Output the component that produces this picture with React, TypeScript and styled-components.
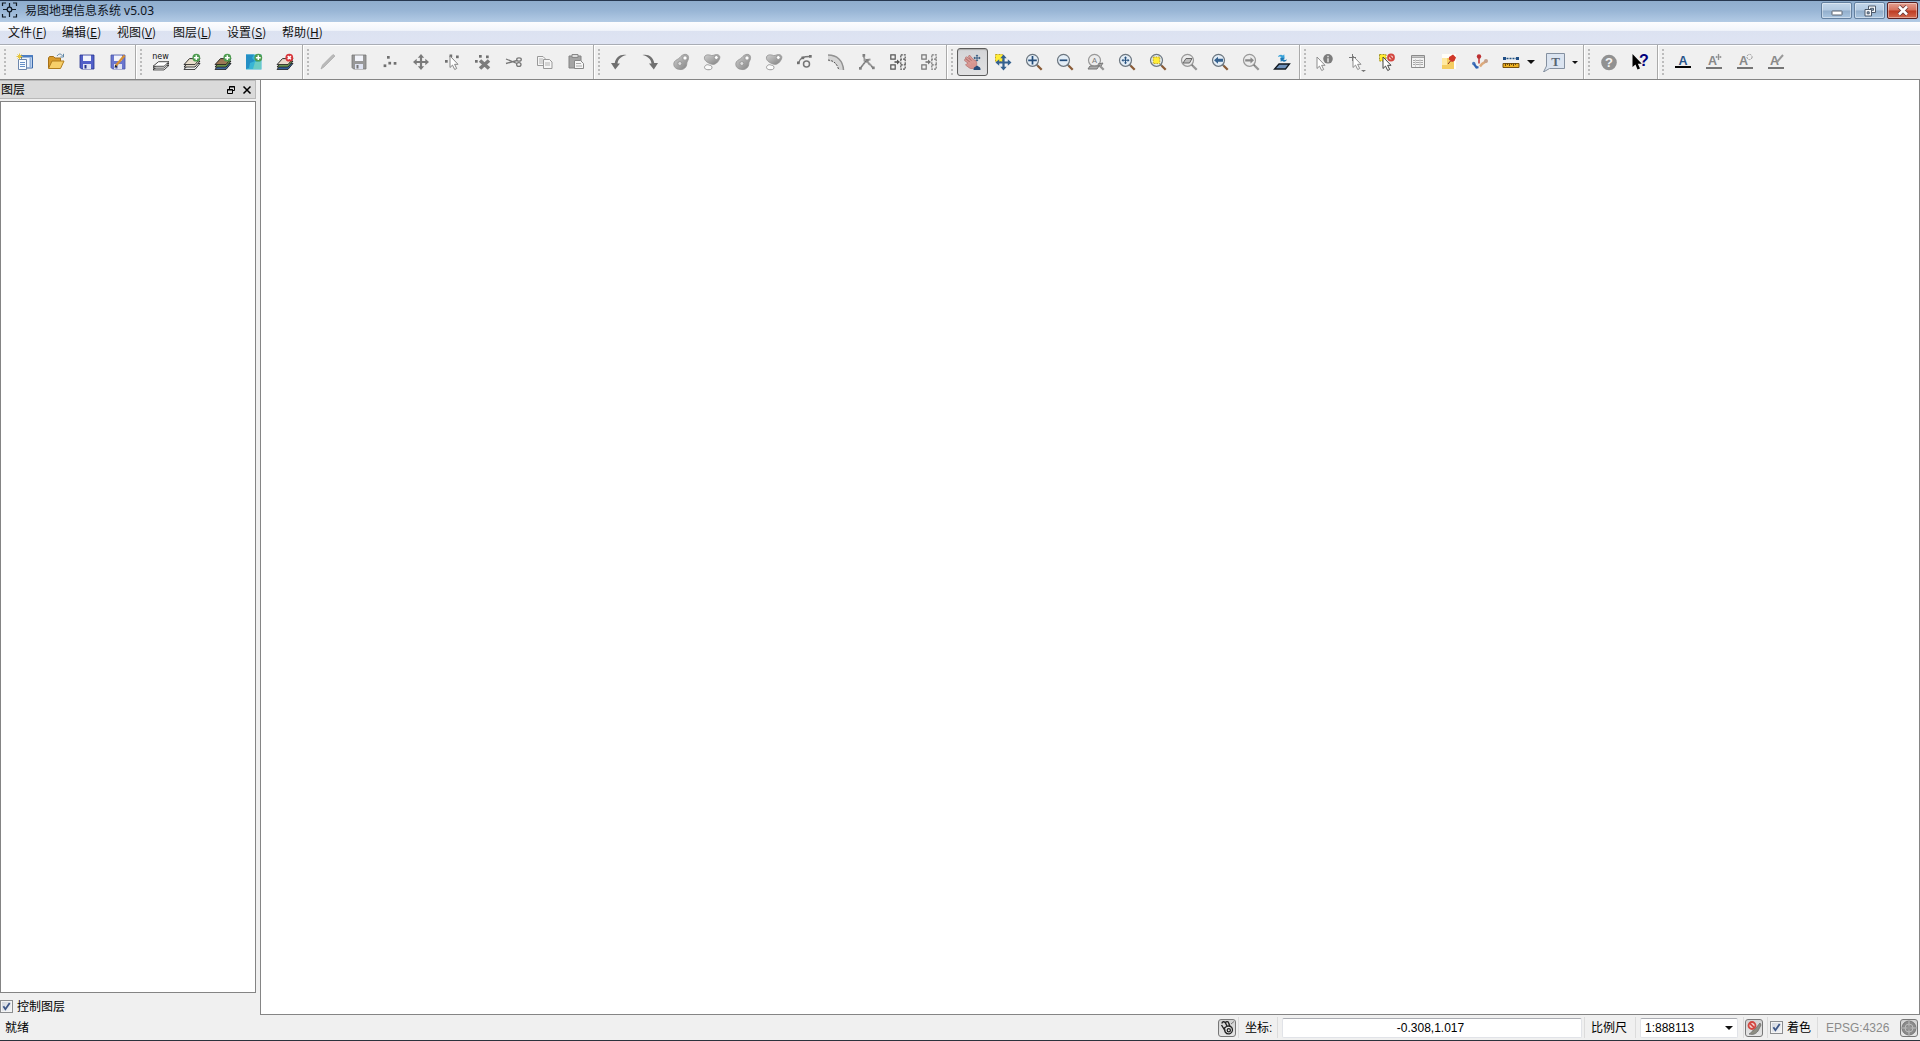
import React from "react";
import styled, { createGlobalStyle, css } from "styled-components";

const ui = `"Noto Sans", "Noto Sans CJK SC", sans-serif`;
const menuFont = `"Noto Sans CJK SC", sans-serif`;
const arial = `"Liberation Sans", "Noto Sans CJK SC", sans-serif`;

const Global = createGlobalStyle`
  * { box-sizing: border-box; }
  html, body { margin: 0; padding: 0; overflow: hidden; }
  body { font: 12px ${arial}; color: #000; background: #f0f0f0; }
`;

const Window = styled.div`
  width: 1920px;
  height: 1041px;
  display: flex;
  flex-direction: column;
  background: #f0f0f0;
  border-bottom: 1px solid #2b333d;
`;

const TitleBar = styled.header`
  height: 22px;
  flex: none;
  display: flex;
  align-items: flex-start;
  border-top: 1px solid #26374f;
  background: linear-gradient(#8fadcd, #98b5d5 45%, #b3cbe5);
`;
const AppIcon = styled.svg`
  width: 18px;
  height: 18px;
  margin: 0 0 0 1px;
`;
const Title = styled.h1`
  margin: 0 auto 0 6px;
  font: 12px/20px ${ui};
  color: #10151d;
`;
const WindowButtons = styled.div`
  display: flex;
  gap: 2px;
  padding: 1px 2px 0 0;
`;
const WindowButton = styled.button<{ $danger?: boolean }>`
  width: 31px;
  height: 17px;
  padding: 0;
  display: flex;
  align-items: center;
  justify-content: center;
  border: 1px solid ${(p) => (p.$danger ? "#5b1f1f" : "#64809f")};
  border-radius: 2px;
  background: ${(p) =>
    p.$danger
      ? "linear-gradient(#e3a091, #d5705c 48%, #bd3a22 52%, #d36a4f)"
      : "linear-gradient(#c3d6ea, #b2c9e1 48%, #92aecb 52%, #abc6e1)"};
  box-shadow: inset 0 0 0 1px rgba(255, 255, 255, 0.4);
`;

const MenuBar = styled.nav`
  height: 22px;
  flex: none;
  display: flex;
  padding-left: 8px;
  background: linear-gradient(#fdfdfe, #f2f5fb 38%, #dce2f1 42%, #dfe4f3);
`;
const MenuItem = styled.span<{ $width: number }>`
  width: ${(p) => p.$width}px;
  font: 12px/20px ${menuFont};
  white-space: nowrap;
  color: #111;
`;
const Key = styled.u`
  text-underline-offset: 1px;
`;

const ToolRow = styled.div`
  height: 36px;
  flex: none;
  display: flex;
  border-top: 1px solid #a9adb5;
  border-bottom: 1px solid #858585;
  box-shadow: inset 0 1px #fff;
`;
const ToolGroup = styled.div<{ $last?: boolean }>`
  display: flex;
  align-items: center;
  padding: 0 1px 0 4px;
  ${(p) => !p.$last && css`
    border-right: 1px solid #aaa;
    box-shadow: 1px 0 #fff;
  `}
`;
const Handle = styled.span`
  width: 2px;
  height: 27px;
  margin-right: 4px;
  background: repeating-linear-gradient(#bcbcbc 0 2px, transparent 2px 4px);
`;
const ToolButton = styled.button<{ $pressed?: boolean; $width?: number }>`
  width: ${(p) => p.$width ?? 31}px;
  height: 28px;
  padding: 0;
  border: 0;
  background: transparent;
  display: flex;
  align-items: center;
  justify-content: center;
  ${(p) => p.$pressed && css`
    border: 1px solid #5c5c5c;
    border-radius: 3px;
    background: linear-gradient(#d3d4d7, #e2e2e3);
    box-shadow: inset 0 1px 1px #aaa;
  `}
  svg { display: block; flex: none; margin-right: 1px; }
`;
const Triangle = styled.i<{ $wide?: boolean }>`
  width: 0;
  height: 0;
  border: ${(p) => (p.$wide ? 4 : 3.5)}px solid transparent;
  border-top-color: #111;
  border-bottom: 0;
`;
const DropArrow = styled.span`
  width: 10px;
  display: flex;
`;

const Body = styled.main`
  flex: 1;
  min-height: 0;
  display: flex;
`;
const Dock = styled.aside`
  width: 256px;
  flex: none;
  display: flex;
  flex-direction: column;
`;
const DockTitle = styled.div`
  height: 19px;
  display: flex;
  align-items: center;
  padding: 0 3px 0 1px;
  font: 12px/18px ${arial};
  background: #dadada;
  border: 1px solid #b9b9b9;
  border-left: 0;
`;
const DockName = styled.span`
  margin-right: auto;
`;
const DockGlyph = styled.svg`
  width: 10px;
  height: 10px;
  margin-left: 6px;
`;
const LayerTree = styled.div`
  flex: 1;
  margin-top: 2px;
  background: #fff;
  border: 1px solid #848484;
`;
const DockFooter = styled.label`
  height: 22px;
  display: flex;
  align-items: center;
  gap: 4px;
  padding-top: 5px;
  line-height: 16px;
`;
const MapCanvas = styled.section`
  flex: 1;
  margin-left: 4px;
  background: #fff;
  border: solid #858585;
  border-width: 0 1px 1px 1px;
`;
const Box = styled.span`
  width: 13px;
  height: 13px;
  flex: none;
  border: 1px solid #8b8d90;
  background: linear-gradient(135deg, #cdd3dc, #f7f8fa);
  box-shadow: inset 0 0 0 1px #f4f4f4;
  svg { display: block; }
`;

const StatusBar = styled.footer`
  height: 25px;
  flex: none;
  display: flex;
  align-items: center;
  font: 12px/20px ${arial};
`;
const Ready = styled.span`
  width: 1218px;
  padding-left: 5px;
`;
const StatusLabel = styled.span<{ $width: number; $indent: number; $muted?: boolean }>`
  width: ${(p) => p.$width}px;
  padding-left: ${(p) => p.$indent}px;
  white-space: nowrap;
  color: ${(p) => (p.$muted ? "#8b8b8b" : "#000")};
`;
const Divider = styled.i`
  width: 1px;
  height: 21px;
  background: #dcdcdc;
`;
const Field = styled.div<{ $width: number; $combo?: boolean }>`
  width: ${(p) => p.$width}px;
  height: 20px;
  margin: 0 ${(p) => (p.$combo ? 5 : 2)}px 0 4px;
  padding: ${(p) => (p.$combo ? "0 4px 0 4px" : "0 3px 0 0")};
  display: flex;
  align-items: center;
  justify-content: ${(p) => (p.$combo ? "space-between" : "center")};
  border: 1px solid #e1e3e8;
  border-top-color: #abadb3;
  border-radius: 2px;
  background: #fff;
`;
const StatusButton = styled.button<{ $gap: number }>`
  width: 18px;
  height: 18px;
  margin: 0 ${(p) => p.$gap}px 0 0;
  padding: 0;
  border: 1px solid #777;
  border-radius: 3px;
  background: linear-gradient(#d2d2d2, #e6e6e6);
  svg { display: block; }
`;
const StatusButtonAfterDivider = styled(StatusButton)`
  margin-left: 1px;
`;
const CheckedLabel = styled.label`
  width: 49px;
  padding-left: 2px;
  display: flex;
  align-items: center;
  gap: 4px;
`;

const Glyph = ({ children, w = 20 }: { children: React.ReactNode; w?: number }) => (
  <svg width={w} height={20} viewBox={`0 0 ${w} 20`} fill="none">
    {children}
  </svg>
);

const Check = () => (
  <Box>
    <svg width="11" height="11" viewBox="0 0 11 11" fill="none">
      <path d="M2.4 5.2l2 3L8.7 2" stroke="#3d5687" strokeWidth="1.8" />
    </svg>
  </Box>
);

const Floppy = ({ c, d }: { c: string; d: string }) => (
  <>
    <path d="M3 3h14v14H4.5L3 15.5z" fill={c} stroke={d} strokeWidth=".8" />
    <path d="M6 3.500h8v5.500H6z" fill="#f2f4fb" />
    <path d="M6 12h8v5H6z" fill="#dfe3f2" />
    <path d="M7.500 13h2v3.500h-2z" fill={d} />
  </>
);
const Stack = ({ tones, flat }: { tones: string[]; flat?: boolean }) => (
  <g
    stroke="#1d1d1d"
    strokeWidth=".9"
    strokeLinejoin="round"
    transform={flat ? "translate(0 4.700) scale(1 .76)" : undefined}
  >
    {tones.map((tone, i) => (
      <path key={i} d="M7.500 9h10.500l-5 6H2z" transform={`translate(0 ${2.4 - i * 2.4})`} fill={tone} />
    ))}
  </g>
);
const Badge = ({ remove }: { remove?: boolean }) => (
  <>
    <circle cx="14.300" cy="5.700" r="3.900" fill={remove ? "#d8363b" : "#4e9c50"} />
    <path
      d={remove ? "M12.700 4.100l3.200 3.200m0-3.200l-3.200 3.200" : "M14.300 3.300v4.800m-2.400-2.400h4.800"}
      stroke="#fff"
      strokeWidth="1.500"
    />
  </>
);
const Move = ({ c, transform }: { c: string; transform?: string }) => (
  <path
    transform={transform}
    fill={c}
    d="M10 2l3.200 3.700h-2.100v3.200h3.200V6.800L18 10l-3.700 3.200v-2.100h-3.200v3.200h2.100L10 18l-3.200-3.700h2.100v-3.200H5.700v2.100L2 10l3.700-3.200v2.100h3.200V5.700H6.800z"
  />
);
const Dots = ({ pts, c = "#707070" }: { pts: number[][]; c?: string }) => (
  <>
    {pts.map(([x, y], i) => (
      <rect key={i} x={x} y={y} width="2.700" height="2.700" fill={c} />
    ))}
  </>
);
const Cursor = ({ x = 0, y = 0, c = "#858585" }: { x?: number; y?: number; c?: string }) => (
  <path
    transform={`translate(${x} ${y})`}
    d="M7 4v11.500l2.500-2.400 2.200 4.400 2-1-2.100-4.200H15z"
    fill="#fff"
    stroke={c}
  />
);
const Lens = ({ grey, children }: { grey?: boolean; children?: React.ReactNode }) => (
  <>
    <path d="M12.500 12.500l1.500 1.500" stroke="#777" strokeWidth="2" />
    <path d="M13.700 13.700l4 4" stroke={grey ? "#969696" : "#8a5b36"} strokeWidth="2.300" />
    <circle cx="8.500" cy="8.300" r="6" fill={grey ? "#ececec" : "#e4eef7"} stroke={grey ? "#999" : "#6d7780"} strokeWidth="1.200" />
    {children}
  </>
);
const Bean = () => (
  <>
    <path d="M13 2.500c3-.8 5 1 4.500 4-.3 2.200-1.700 3-1.700 5 0 4-3.500 6.500-7 6-4-.3-6.300-2.700-6-6 .3-2.800 3-3.600 5-5 1.700-1.200 2.400-3.300 5.200-4z" fill="url(#grey)" stroke="#929292" strokeWidth=".8" />
    <circle cx="14" cy="6" r="2.200" fill="#fff" stroke="#999" />
    <circle cx="8.800" cy="11.500" r="2" fill="#ddd" stroke="#999" />
  </>
);
const Part = () => (
  <>
    <path d="M2.500 5c1-3 5-2.200 7-1.500 2 .5 4-2 7-.5 2.500 1.500 1 4.500-.5 6.500-1.700 2.200-4 3.600-7 2.500C6 11 1.600 8.500 2.500 5z" fill="url(#grey)" stroke="#929292" strokeWidth=".8" />
    <circle cx="14.300" cy="5.500" r="2" fill="#fff" stroke="#999" />
    <path d="M4.200 13c1.500-.8 3 .3 4.500.5 1.700.3 1.800 3.700-.2 4-2 .4-3.500.3-4.700-.3C1.800 16.300 2.300 14 4.200 13z" fill="#fbfbfb" stroke="#999" />
  </>
);
const Letter = ({ c, x = 8.5, y = 13.3 }: { c: string; x?: number; y?: number }) => (
  <text x={x} y={y} textAnchor="middle" fontFamily="Liberation Sans, sans-serif" fontWeight="700" fontSize="12.500" fill={c}>
    A
  </text>
);
const Underline = ({ c, y }: { c: string; y: number }) => (
  <path d={`M2 ${y}h16`} stroke={c} strokeWidth="2" />
);
const Merge = ({ c }: { c: string }) => (
  <g stroke={c} strokeWidth="1.200">
    <path d="M2.800 2.800h4.400v4.400H2.800zM2.800 12.800h4.400v4.400H2.800z" />
    <path d="M12.800 2.800h4.400v4.400h-4.400zM12.800 12.800h4.400v4.400h-4.400zM12.800 7.200v5.600M17.200 7.200v5.600" strokeDasharray="2 1" />
    <path d="M6.500 10h3" strokeWidth="1.600" />
    <path d="M9 7.500l3 2.500-3 2.500z" fill={c} stroke="none" />
  </g>
);
const Prohibit = ({ x, y, r }: { x: number; y: number; r: number }) => (
  <g transform={`translate(${x} ${y})`} stroke="#d34740" strokeWidth="1.800">
    <circle r={r} fill="#f4d5d2" />
    <path d={`M${-r * 0.7} ${-r * 0.7}L${r * 0.7} ${r * 0.7}`} />
  </g>
);

const fileTools = [
  <Glyph>
    <path d="M6.500 3.500h11v12.500H9V8H6.500z" fill="#eef4fb" stroke="#3b69aa" />
    <path d="M6.500 3h11.200v2.500H6.500z" fill="#4c7ec2" />
    <path d="M15.500 6v9" stroke="#8fb0dd" strokeWidth="2" />
    <path d="M3.500 7.500h8v10h-8z" fill="#f7fbff" stroke="#6d87ad" />
    <path d="M5 10.500h5m-5 2h5m-5 2h5" stroke="#6790c7" />
    <path d="M4.500 1.500v6M1.500 4.500h6M2.500 2.500l4 4m0-4l-4 4" stroke="#e6c53c" />
  </Glyph>,
  <Glyph>
    <path d="M2.500 16V6l1-1.500h4L9 6h5.500v3" fill="#d99b2c" stroke="#a57018" />
    <path d="M2.500 16.500L6 9h12l-3.500 7.500z" fill="#f7cf69" stroke="#b17d1d" />
    <path d="M11 4c2-3 4.500-2.200 5.500 0m1-2.200V5h-3.200" stroke="#5e86a7" />
  </Glyph>,
  <Glyph><Floppy c="#5260c8" d="#27338e" /></Glyph>,
  <Glyph>
    <Floppy c="#6a76cf" d="#4a55a4" />
    <path d="M8 13.500L16.500 3.500" stroke="#d69034" strokeWidth="2.300" />
    <path d="M6.500 15.800l.8-3 2 1.700z" fill="#222" />
  </Glyph>,
];

const layerTools = [
  <Glyph>
    <text x="9.500" y="7.200" textAnchor="middle" fontFamily="DejaVu Sans, sans-serif" fontSize="8" fill="#111">new</text>
    <Stack flat tones={["#fff", "#fff", "#fff"]} />
  </Glyph>,
  <Glyph><Stack tones={["#fff", "#f1ead9", "#e9decb"]} /><Badge /></Glyph>,
  <Glyph><Stack tones={["#426fa7", "#74a34e", "#9d7855"]} /><Badge /></Glyph>,
  <Glyph>
    <path d="M2 2.500h15.500v15H2z" fill="#38b5d5" />
    <path d="M2 2.500h8L8 6l3 3-5 2-1 5-3 1z" fill="#248fc5" />
    <path d="M11 10l6-1v8h-8z" fill="#6accc3" />
    <Badge />
  </Glyph>,
  <Glyph><Stack tones={["#3567a5", "#72a157", "#ead9cb"]} /><Badge remove /></Glyph>,
];

const editTools = [
  <Glyph><path d="M3 17l1.500-4L15 2.500l2 1.500L6 15z" fill="#b9b9b9" stroke="#a8a8a8" strokeWidth=".7" /></Glyph>,
  <Glyph><Floppy c="#989898" d="#777" /></Glyph>,
  <Glyph><Dots pts={[[7, 4], [3.6, 12.4], [8.4, 9.8], [13.7, 10]]} /></Glyph>,
  <Glyph><Move c="#7b7b7b" /></Glyph>,
  <Glyph><Dots pts={[[3, 8], [7.5, 2.5], [14, 3.5]]} /><Cursor x={1} /></Glyph>,
  <Glyph>
    <Dots pts={[[2, 8], [6, 3], [13, 3.5]]} />
    <path d="M7 8.500L16 16.500M16 8.500l-9 8" stroke="#7d7d7d" strokeWidth="3.600" />
  </Glyph>,
  <Glyph>
    <path d="M2 7l11 4.500M2 11.500l11-3" stroke="#777" strokeWidth="1.300" />
    <ellipse cx="15" cy="7.500" rx="2.300" ry="1.700" stroke="#777" strokeWidth="1.300" />
    <ellipse cx="14.800" cy="12.500" rx="2.200" ry="1.900" stroke="#777" strokeWidth="1.300" />
  </Glyph>,
  <Glyph>
    <g fill="#f6f6f6" stroke="#999">
      <path d="M2.500 4.500H8l2 2v7H2.500z" /><path d="M8.500 7.500h6l2.500 2.500v6.500H8.500z" />
      <path d="M4 7h4m-4 2h4m-4 2h4m2 0h5m-5 2h5" stroke="#b4b4b4" />
    </g>
  </Glyph>,
  <Glyph>
    <path d="M3 4h12v12H3z" fill="#a4a4a4" stroke="#828282" />
    <path d="M6 2.500h6v3H6z" fill="#ddd" stroke="#888" />
    <path d="M8.500 8.500h6l3 3v5h-9z" fill="#f6f6f6" stroke="#888" />
    <path d="M10 11.500h5m-5 2.500h6" stroke="#aaa" />
  </Glyph>,
];

const digitizeTools = [
  <Glyph><path d="M17.500 3C12 1.500 6.500 5 5.800 11H2l4.200 6.500L11 11.500H8.500C9 7 12 4.500 17.500 3z" fill="#707070" /></Glyph>,
  <Glyph><path d="M2.500 3C8 1.500 13.500 5 14.200 11H18l-4.200 6.500L9 11.500h2.500C11 7 8 4.500 2.500 3z" fill="#707070" /></Glyph>,
  <Glyph><Bean /></Glyph>,
  <Glyph><Part /></Glyph>,
  <Glyph><Bean /></Glyph>,
  <Glyph><Part /></Glyph>,
  <Glyph>
    <path d="M3.500 11C5 6 8 4.500 15 4.500" stroke="#777" strokeWidth="1.400" />
    <Dots pts={[[2, 9.5], [6.5, 4.5], [14, 3]]} />
    <circle cx="11.500" cy="12" r="3" stroke="#777" strokeWidth="1.500" />
  </Glyph>,
  <Glyph>
    <path d="M2 3c9 0 15 5.500 15.500 15H13C11 12 8 10 2 9z" fill="#d5d5d5" />
    <path d="M2 3c9 0 15 5.500 15.500 15" stroke="#919191" strokeWidth="1.500" />
    <path d="M2 8c6 .5 9 4 10.500 9" stroke="#555" strokeDasharray="2 1.200" />
  </Glyph>,
  <Glyph>
    <path d="M6.500 4l2 5.500-5 6.500M8 8.500c3 1 5 3 8 7.500M6.500 8.500l7-1" stroke="#999" strokeWidth="1.800" />
    <path d="M8.500 9.500l-5 6.500M8 9l8 7" stroke="#666" strokeDasharray="1 1" />
    <Dots pts={[[5.5, 2], [2, 15], [15, 14.5], [9, 7]]} c="#808080" />
  </Glyph>,
  <Glyph><Merge c="#555" /></Glyph>,
  <Glyph><Merge c="#777" /></Glyph>,
];

const navTools = [
  <Glyph>
    <path d="M3.500 8l5 4M4.500 5.800l6 5M7.500 4.500l5 6" stroke="#b3716f" strokeWidth="2.600" strokeLinecap="round" />
    <path d="M5 11.500l4-3 4.500-.5c2 3 1.500 5.500-.5 7.500-1.500 1.500-4.500 1.500-6 .2L3.500 13z" fill="#d69590" stroke="#b3716f" strokeWidth=".7" />
    <path d="M3.500 8l5 4M4.500 5.800l6 5M7.500 4.500l5 6" stroke="#d99c97" strokeWidth="1.400" strokeLinecap="round" />
    <Move c="#31577e" transform="translate(10.500 1.500) scale(.45)" />
    <path d="M11.500 18c-.2-2 1-3 2-3.200.3-1.500 2.800-1.500 3.200 0 1.200.3 2 1.300 1.800 3.200z" fill="#264b7a" />
  </Glyph>,
  <Glyph>
    <path d="M2.500 2.500h7v7h-7z" fill="#ffed35" stroke="#c4a51d" strokeDasharray="2 1" />
    <Move c="#35618f" transform="translate(.5 .5)" />
  </Glyph>,
  <Glyph><Lens><path d="M8.500 4v8.600M4.200 8.300h8.600" stroke="#244c79" strokeWidth="1.700" /></Lens></Glyph>,
  <Glyph><Lens><path d="M4.700 8.300h7.600" stroke="#244c79" strokeWidth="1.700" /></Lens></Glyph>,
  <Glyph>
    <Lens grey><text x="8.500" y="11" textAnchor="middle" fontFamily="Liberation Sans, sans-serif" fontSize="7.500" fill="#777">A</text></Lens>
    <path d="M4 14h9l-2 3H2zM12 12l5-1-2 3" stroke="#777" fill="#aaa" />
  </Glyph>,
  <Glyph><Lens><Move c="#28527f" transform="translate(3.500 3.300) scale(.5)" /></Lens></Glyph>,
  <Glyph><Lens><path d="M5.200 5h6.600v6.600H5.200z" fill="#ffed35" stroke="#bd9f24" strokeDasharray="1.500 1" /></Lens></Glyph>,
  <Glyph><Lens grey><path d="M4 11l3-4.500h6L10.500 11z" fill="#bdbdbd" stroke="#666" /></Lens></Glyph>,
  <Glyph><Lens><path d="M4 8.300l4-3.500v2h5v3H8v2z" fill="#35618f" /></Lens></Glyph>,
  <Glyph><Lens grey><path d="M13 8.300L9.500 5.200v2H4.200v2.200h5.300v2z" fill="#888" /></Lens></Glyph>,
  <Glyph>
    <path d="M7 12h10.500l-4 5H2.500z" fill="#6f91ba" stroke="#101820" strokeWidth="1.300" />
    <path d="M6 5c.5-2.500 3.500-3 5-1.500l1.200-1.300.5 4.300-4.300-.3 1.200-1.200C8.500 4.200 7.200 4.200 6 5z" fill="#39a2d9" />
    <path d="M15 7.300c-.5 2.500-3.500 3-5 1.500l-1.200 1.300-.5-4.300 4.300.3-1.200 1.200c1.100.8 2.400.8 3.600 0z" fill="#1d78b5" />
  </Glyph>,
];

const attributeTools = [
  <Glyph>
    <Cursor x={-5} y={1} c="#8d8d8d" />
    <circle cx="13" cy="6.800" r="4.800" fill="#7c7c7c" />
    <path d="M13 3.800v1.500M13 6.300v4" stroke="#ddd" strokeWidth="1.600" />
  </Glyph>,
  <Glyph>
    <Cursor c="#8d8d8d" />
    <path d="M6.500 2v7M3 5.500h7" stroke="#777" />
    <path d="M15 18h5l-2.500 2z" fill="#777" />
  </Glyph>,
  <Glyph>
    <path d="M2.500 2.500H9V9H2.500z" fill="#ffeb30" stroke="#a59625" strokeDasharray="2 1" />
    <Cursor x={-1} y={1} c="#444" />
    <Prohibit x={14} y={5.5} r={3} />
  </Glyph>,
  <Glyph>
    <path d="M3.500 3.500h13v12h-13z" fill="#f3f3f3" stroke="#8b8b8b" />
    <path d="M4 5.200h12" stroke="#a5a5a5" strokeWidth="1.500" />
    <path d="M5 8.500h10m-10 2h10m-10 2h10" stroke="#a8a8a8" />
    <path d="M7.500 7v8M12 7v8" stroke="#d1d1d1" />
  </Glyph>,
  <Glyph>
    <path d="M3 2h14v15H3z" fill="#fffef9" />
    <path d="M3 6h12v11H3z" fill="#f4cd61" />
    <path d="M3 6h5v7H3z" fill="#ffe9a0" />
    <path d="M10 5l4-2.500 3 3L15.500 9l-2.500 1-3.200-2.500z" fill="#d03728" />
    <path d="M11.500 9L9 12" stroke="#812b23" />
  </Glyph>,
  <Glyph>
    <circle cx="9" cy="4.500" r="2.200" fill="#bd3032" />
    <path d="M9 6v5.500" stroke="#bd3032" strokeWidth="1.500" />
    <circle cx="3.700" cy="11.500" r="1.700" fill="#4b79bd" />
    <path d="M4 12l2.500 3.500 2-.3" stroke="#2e62b2" strokeWidth="2.200" />
    <path d="M10 14.500l2-2.500 4.500-3" stroke="#dcaa7c" strokeWidth="2.500" />
    <circle cx="16" cy="9" r="2" fill="#c4a08b" />
  </Glyph>,
  <Glyph>
    <path d="M2.500 6.500h15" stroke="#215283" strokeWidth="1.400" strokeDasharray="2 1" />
    <path d="M2 5h3v3H2zM15 5h3v3h-3z" fill="#214f86" />
    <path d="M2 11.500h16v4H2z" fill="#ebb020" stroke="#76500f" />
    <path d="M4.500 11v3m2-3v2m2-2v3m2-3v2m2-2v3m2-3v2" stroke="#69480f" />
  </Glyph>,
];

const helpTools = [
  <Glyph>
    <circle cx="10" cy="10.500" r="7.800" fill="#919191" />
    <text x="10" y="15" textAnchor="middle" fontFamily="Liberation Sans, sans-serif" fontWeight="700" fontSize="13" fill="#f4f4f4">?</text>
  </Glyph>,
  <Glyph>
    <path d="M2.500 2v13l3-2.500 2 5 2.500-1-2.200-4.800h4z" fill="#000" />
    <text x="14" y="14" textAnchor="middle" fontFamily="Liberation Sans, sans-serif" fontWeight="700" fontSize="16" fill="#00007c">?</text>
  </Glyph>,
];

const labelTools = [
  <Glyph><Letter c="#28558a" x={10} y={12.6} /><Underline c="#050505" y={15} /></Glyph>,
  <Glyph><Letter c="#888" /><Underline c="#757575" y={16} /><Move c="#888" transform="translate(10.500 1) scale(.4)" /></Glyph>,
  <Glyph><Letter c="#888" /><Underline c="#757575" y={16} /><circle cx="14.500" cy="5" r="2.600" stroke="#999" strokeDasharray="2 1" /></Glyph>,
  <Glyph><Letter c="#888" /><Underline c="#757575" y={16} /><path d="M11 10l6-7" stroke="#999" strokeWidth="2" /></Glyph>,
];

type GroupProps = {
  icons: React.ReactNode[];
  pressed?: number;
  last?: boolean;
  children?: React.ReactNode;
};
const Group = ({ icons, pressed, last, children }: GroupProps) => (
  <ToolGroup $last={last}>
    <Handle />
    {icons.map((icon, i) => (
      <ToolButton key={i} $pressed={i === pressed}>{icon}</ToolButton>
    ))}
    {children}
  </ToolGroup>
);

const menus: [string, string, number][] = [
  ["文件", "F", 54], ["编辑", "E", 55], ["视图", "V", 56],
  ["图层", "L", 54], ["设置", "S", 55], ["帮助", "H", 50],
];

export default function App() {
  return (
    <Window>
      <Global />
      <TitleBar>
        <AppIcon viewBox="0 0 18 18" fill="none" stroke="#111a24" strokeWidth="1.200">
          <linearGradient id="grey" x1="0" y1="0" x2="1" y2="1">
            <stop stopColor="#d2d2d2" />
            <stop offset="1" stopColor="#808080" />
          </linearGradient>
          <path d="M1.500 5V2H5M12 2h3.500v3M15.500 13v3H12M5 16H1.500v-3" />
          <path d="M8.500 2v4M8.500 11v5M2 8.500h4M11 8.500h4" />
          <circle cx="8.500" cy="8.500" r="2.300" />
        </AppIcon>
        <Title>易图地理信息系统 v5.03</Title>
        <WindowButtons>
          <WindowButton>
            <svg width="12" height="11" viewBox="0 0 12 11"><rect x="1" y="6" width="10" height="4" rx=".5" fill="#fff" stroke="#58616e" /></svg>
          </WindowButton>
          <WindowButton>
            <svg width="12" height="12" viewBox="0 0 12 12" fill="#f6f8fb" stroke="#4e5a6a">
              <path d="M4.500 1h7v6.500h-7z" /><path d="M6.500 3.300h3v2h-3z" fill="#92aecb" />
              <path d="M1 4.500h6.500V11H1z" /><path d="M3.200 6.800h2v2h-2z" fill="#92aecb" />
            </svg>
          </WindowButton>
          <WindowButton $danger>
            <svg width="12" height="11" viewBox="0 0 12 11">
              <path d="M2 1.500l8 8m0-8l-8 8" stroke="#643536" strokeWidth="4" />
              <path d="M2 1.500l8 8m0-8l-8 8" stroke="#fff" strokeWidth="2.500" />
            </svg>
          </WindowButton>
        </WindowButtons>
      </TitleBar>
      <MenuBar>
        {menus.map(([name, key, width]) => (
          <MenuItem key={key} $width={width}>{name}(<Key>{key}</Key>)</MenuItem>
        ))}
      </MenuBar>
      <ToolRow>
        <Group icons={fileTools} />
        <Group icons={layerTools} />
        <Group icons={editTools} />
        <Group icons={digitizeTools} />
        <Group icons={navTools} pressed={0} />
        <Group icons={attributeTools}>
          <DropArrow><Triangle $wide /></DropArrow>
          <ToolButton $width={35}>
            <Glyph w={24}>
              <path d="M4.500 1.500h18v15H7.500l-6 3.500 3-6z" fill="#dbe4f0" stroke="#8490a0" />
              <text x="13.500" y="13.700" textAnchor="middle" fontFamily="Liberation Serif, serif" fontWeight="700" fontSize="13" fill="#596573">T</text>
            </Glyph>
          </ToolButton>
          <DropArrow><Triangle /></DropArrow>
        </Group>
        <Group icons={helpTools} />
        <Group icons={labelTools} last />
      </ToolRow>
      <Body>
        <Dock>
          <DockTitle>
            <DockName>图层</DockName>
            <DockGlyph viewBox="0 0 10 10" fill="none" stroke="#000">
              <path d="M3.500 4V1.500h5v4H6.500M3 2h6" /><path d="M1.500 4.500h5v4h-5zM1 5h6" />
            </DockGlyph>
            <DockGlyph viewBox="0 0 10 10"><path d="M1.500 1.500l7 7m0-7l-7 7" stroke="#000" strokeWidth="1.500" /></DockGlyph>
          </DockTitle>
          <LayerTree />
          <DockFooter><Check />控制图层</DockFooter>
        </Dock>
        <MapCanvas />
      </Body>
      <StatusBar>
        <Ready>就绪</Ready>
        <StatusButton $gap={2}>
          <svg width="16" height="16" viewBox="0 0 16 16" fill="none" stroke="#222">
            <path d="M3 3.500c0-2 2.500-2.500 3.500-.5l2 4M6.500 2.500c1-1.500 2.800-1 3.200.5l1 3M2.500 5l4 6.500" strokeWidth="1.400" />
            <path d="M5.500 8c2-2.500 5-2.500 7-.8 1.500 2 1.200 4.800-.8 6-2 1.200-4.200.6-5.500-1.200z" fill="#e8e8e8" strokeWidth="1.300" />
            <circle cx="9.800" cy="10.300" r="1.600" strokeWidth="1.300" /><path d="M12 4l3-2.500" stroke="#777" />
          </svg>
        </StatusButton>
        <Divider />
        <StatusLabel $width={38} $indent={6}>坐标:</StatusLabel>
        <Divider />
        <Field $width={300}>-0.308,1.017</Field>
        <Divider />
        <StatusLabel $width={50} $indent={6}>比例尺</StatusLabel>
        <Divider />
        <Field $width={98} $combo>1:888113<Triangle $wide /></Field>
        <Divider />
        <StatusButtonAfterDivider $gap={4}>
          <svg width="16" height="16" viewBox="0 0 16 16" fill="none">
            <path d="M3 14c3-1 3-4 6-5l5-6 1 2-3 6c-2 3-5 4-9 3z" fill="#8d8d82" stroke="#666" strokeWidth=".7" />
            <Prohibit x={6} y={5.5} r={3.5} />
          </svg>
        </StatusButtonAfterDivider>
        <Divider />
        <CheckedLabel><Check />着色</CheckedLabel>
        <Divider />
        <StatusLabel $width={82} $indent={8} $muted>EPSG:4326</StatusLabel>
        <StatusButton $gap={0}>
          <svg width="16" height="16" viewBox="0 0 16 16" fill="none">
            <circle cx="8" cy="8" r="7" fill="#8b8b8b" stroke="#777" />
            <circle cx="8" cy="8" r="4" stroke="#bcbcbc" /><path d="M8 1v14M1 8h14" stroke="#bcbcbc" />
            <circle cx="8" cy="8" r="2" fill="#999" />
          </svg>
        </StatusButton>
      </StatusBar>
    </Window>
  );
}
